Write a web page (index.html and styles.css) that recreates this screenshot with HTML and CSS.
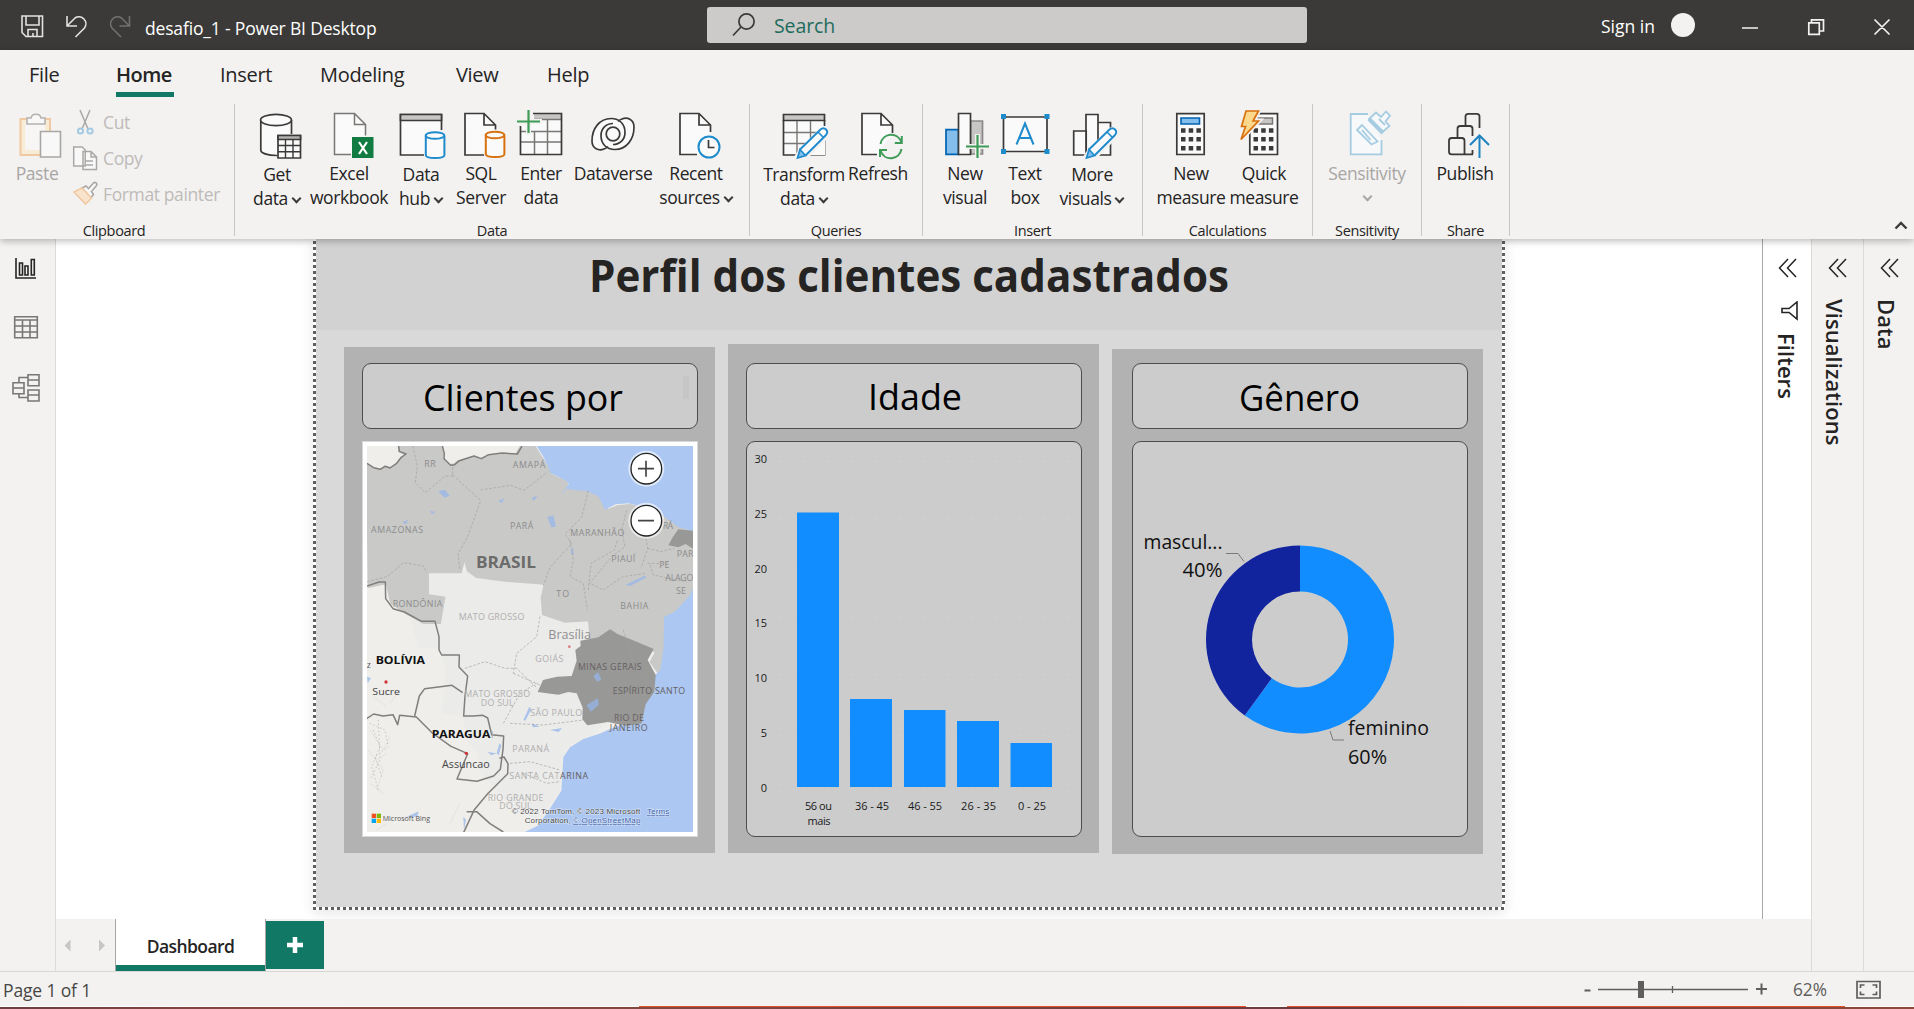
FILE: index.html
```html
<!DOCTYPE html>
<html lang="en">
<head>
<meta charset="utf-8">
<title>desafio_1 - Power BI Desktop</title>
<link rel="stylesheet" href="styles.css">
</head>
<body>
<div class="app">
  <header class="titlebar">
    <svg class="quick" width="140" height="50" fill="none" stroke="#e4e2e0" stroke-width="1.6">
      <path d="M22 16H42.500V36.500H26L22 32.500ZM26 16V25H39V16M28 36V29.500H37V36M33 36v-3"/>
      <path d="M67 16v10h10M67.500 25.500l7.500-7.500a7 7 0 0 1 9.500 10l-9 9"/>
      <path stroke="#73716f" d="M129.500 16v10h-10M129 25.500l-7.500-7.500a7 7 0 0 0-9.500 10l9 9"/>
    </svg>
    <div class="doc-name">desafio_1 - Power BI Desktop</div>
    <div class="search">
      <svg width="26" height="26" fill="none" stroke="#3b3a39" stroke-width="1.7"><circle cx="15.500" cy="9.500" r="7.600"/><path d="M10 15L2 23.500"/></svg>
      <span>Search</span>
    </div>
    <div class="signin">Sign in</div>
    <div class="avatar"></div>
    <svg class="winbtns" width="160" height="50" fill="none" stroke="#f3f2f1" stroke-width="1.7">
      <path d="M8 28h16M74.800 22.800h10.500v11.500H74.800zM77.500 22.800v-3h12V31h-4M140.500 19.500l15 15M155.500 19.500l-15 15"/>
    </svg>
  </header>

  <section class="ribbon">
    <nav class="tabs">
      <span class="tab t-file">File</span>
      <span class="tab t-home">Home</span>
      <span class="tab t-insert">Insert</span>
      <span class="tab t-modeling">Modeling</span>
      <span class="tab t-view">View</span>
      <span class="tab t-help">Help</span>
    </nav>
    <div class="groups">
      <div class="group g-clip">
        <div class="clip-body">
          <div class="btn off w-paste">
            <svg class="ico" viewBox="10 106 60 58"><path d="M24 119h26v36H20.500v-36z" fill="#f9ecd6" stroke="#f0c9a0" stroke-width="2"/><path d="M25 123h20v27H25z" fill="#f7f6f5"/><path d="M27 124v-6h4c1-5 9-5 10 0h4v6z" fill="#f8f8f8" stroke="#b5b3b1" stroke-width="1.600"/><path d="M40.500 131.500h20v25.500h-20z" fill="#f8f8f8" stroke="#a9a7a5" stroke-width="1.600"/></svg>
            <span>Paste</span>
          </div>
          <div class="clip-list">
            <div class="mini"><svg width="26" height="26" viewBox="72 109 26 26" fill="none" stroke-width="1.500"><path stroke="#aaa8a6" d="M80 110l8 19M90 110l-8 19"/><g stroke="#a3c9e4" stroke-width="2"><circle cx="80.500" cy="131" r="2.600"/><circle cx="90" cy="131" r="2.600"/></g></svg>Cut</div>
            <div class="mini"><svg width="26" height="26" viewBox="72 145 26 26" fill="#f8f8f8" stroke="#aaa8a6" stroke-width="1.500"><path d="M73.700 147h8.500l3 3v16H73.700zM83 151.500h8l5.500 5.500v12.500H83zM91 151.500v5.500h5.500M86 161h7M86 165h7"/></svg>Copy</div>
            <div class="mini"><svg width="26" height="26" viewBox="72 181 26 26" stroke-width="1.600"><path fill="#f8f8f8" stroke="#aaa8a6" d="M82 188l4-2 2.500 2.500 5-5.500c2-1.500 4 .5 3 2.500l-5 6 2 3-3 3.500z"/><path fill="#fae3cd" stroke="#f0c9a4" d="M74 192l8-4 9.500 10-6 6z"/></svg>Format painter</div>
          </div>
        </div>
        <div class="gname">Clipboard</div>
      </div>

      <div class="group g-data">
        <div class="btns">
          <div class="btn w64 low"><svg class="ico" viewBox="247 106 60 58" fill="#fafafa" stroke="#3b3a39" stroke-width="1.700"><path d="M260.800 120v30c0 3 6 5.500 16 5.500l15-5V120z" stroke="none"/><path d="M277 155.500c-10 0-16.200-2.500-16.200-5.500v-30M291.500 120v14"/><ellipse cx="276" cy="120" rx="15.400" ry="5.600"/><path d="M278 135.500h22.500v22.500H278z"/><path fill="#b3b1af" d="M278 135.500h22.500v4H278z"/><path d="M278 145.500h22.500M278 151.700h22.500M285.500 140v18M293 140v18" stroke-width="1.400"/></svg><span>Get<br>data<i class="chev"></i></span></div>
          <div class="btn w80"><svg class="ico" viewBox="319 106 60 58" fill="#fafafa" stroke="#797775" stroke-width="1.500"><path d="M353 154.500h-18.500v-41h20L365.500 124.500v14h-12z" stroke="none"/><path d="M351 154.500h-16.500v-41h20L365.500 124.500v11M354.500 113.500v11h11"/><path fill="#107c41" stroke="none" d="M352 137h21.500v21H352z"/><path d="M359 142l8 12M367 142l-8 12" stroke="#fff" stroke-width="2.200"/></svg><span>Excel<br>workbook</span></div>
          <div class="btn w64 low"><svg class="ico" viewBox="391 106 60 58" fill="#fafafa" stroke="#3b3a39" stroke-width="1.700"><path d="M424 155h-23.500v-40.500h41V129L424 134z" stroke="none"/><path d="M424 155h-23.500v-40.500h41V130"/><path fill="#c8c6c4" d="M400.500 114.500h41v6h-41z"/><g stroke="#1e8bcd" stroke-width="2"><path d="M425.800 136v19c0 4 18.600 4 18.600 0v-19"/><ellipse cx="435" cy="135.500" rx="9.300" ry="3.300"/></g></svg><span>Data<br>hub<i class="chev"></i></span></div>
          <div class="btn w56"><svg class="ico" viewBox="451 106 60 58" fill="#fafafa" stroke="#3b3a39" stroke-width="1.700"><path d="M484 155h-19v-41.500h19L495.500 125v6l-12 4z" stroke="none"/><path d="M484 155h-19v-41.500h19L495.500 125v4.500M484 113.500v11.500h11.500"/><g stroke="#d8700e" stroke-width="2"><path d="M485.800 135.500v18.500c0 4 18.600 4 18.600 0v-18.500"/><ellipse cx="495" cy="135" rx="9.300" ry="3.300"/></g></svg><span>SQL<br>Server</span></div>
          <div class="btn w64"><svg class="ico" viewBox="511 106 60 58" fill="#fafafa" stroke="#3b3a39" stroke-width="1.700"><path d="M520.500 125v29.500h41v-41H533v11z" stroke="none"/><path d="M534 114h27.500v5H534z" fill="#c8c6c4" stroke="none"/><path stroke="#797775" stroke-width="1.500" d="M534 119.500h27M520.500 131.500h41M520.500 142h41M534.500 132v22M547.500 120v34"/><path fill="none" d="M520.500 126v28.500h41v-41H533"/><path stroke="#f3f2f1" stroke-width="5" d="M528.500 122v13M528 121.500h14"/><path stroke="#3f9b58" stroke-width="2.200" d="M528.500 110v23M517 121.500h23"/></svg><span>Enter<br>data</span></div>
          <div class="btn w80"><svg class="ico" viewBox="583 106 60 58" fill="none" stroke="#3b3a39" stroke-width="1.700"><path fill="#fafafa" stroke="none" d="M607 148c-8 3-15 1-15-7 0-13 8-22.500 19-22.500 3 0 6 1 8 2 8-4 15-2 15 6.500 0 13-8 22.500-19 22.500-3 0-6-.5-8-1.500z"/><path d="M608 146.500q-2 2-4 2.500c-5 2-12 0-12-8 0-13 8-22.500 19-22.500 9 0 14 6 14 14 0 7-5 12-12 12M618 121.500q2-2 4-2.500c5-2 12 0 12 8 0 13-8 22.500-19 22.500-9 0-14-6-14-14 0-7 5-12 12-12"/><circle cx="613" cy="134" r="6.800"/></svg><span>Dataverse</span></div>
          <div class="btn w86"><svg class="ico" viewBox="666 106 60 58" fill="#fafafa" stroke="#3b3a39" stroke-width="1.700"><path d="M698 154.500h-18v-41h19L710.500 125v11l-12 4z" stroke="none"/><path d="M697 154.500h-17v-41h19L710.500 125v7M699 113.500v11.500h11.500"/><circle cx="709" cy="147" r="10.500" stroke="#1e8bcd" stroke-width="2"/><path d="M708.500 140v7.500h6"/></svg><span>Recent<br>sources<i class="chev"></i></span></div>
        </div>
        <div class="gname">Data</div>
      </div>

      <div class="group g-queries">
        <div class="btns">
          <div class="btn w80 low"><svg class="ico" viewBox="774 106 60 58" fill="#fafafa" stroke="#3b3a39" stroke-width="1.700"><path d="M783.500 114.500h41V155h-41z" stroke="none"/><path d="M783.500 114.500h41v6h-41z" fill="#c8c6c4"/><path stroke="#797775" stroke-width="1.400" d="M784 132.500h40M784 143.500h30M797 121v34M810.500 121v24"/><path d="M824.500 120v6M797 155h-13.500v-35M804 155h20.500v-15" fill="none"/><path d="M805 155.300h20v-20z" fill="#fafafa" stroke="none"/><use href="#pencil" x="784" y="107"/></svg><span>Transform<br>data<i class="chev"></i></span></div>
          <div class="btn w68"><svg class="ico" viewBox="848 106 60 58" fill="#fafafa" stroke="#3b3a39" stroke-width="1.700"><path d="M879 154.500h-17v-41h19L892.500 125v12l-12 4z" stroke="none"/><path d="M877 154.500h-15v-41h19L892.500 125v8M881 113.500v11.500h11.500"/><g fill="none" stroke="#3f9b58" stroke-width="2"><path d="M880.500 144c2-11 17-13 21-1.500M901.800 136v7h-7M901.500 149c-2 11-17 13-21 1.500M880 157v-7h7"/></g></svg><span>Refresh</span></div>
        </div>
        <div class="gname">Queries</div>
      </div>

      <div class="group g-insert">
        <div class="btns">
          <div class="btn w60"><svg class="ico" viewBox="935 106 60 58" fill="#fafafa" stroke="#3b3a39" stroke-width="1.700"><path fill="#83beec" stroke="#0063b1" d="M946 129.700h12.500v24.600H946z"/><path fill="#c8c6c4" stroke="#8a8886" d="M970.500 121h12v33h-12z"/><path d="M958.500 113.500h12v41h-12z"/><path stroke="#f3f2f1" stroke-width="5" d="M977.500 134v24M966 146.500h23"/><path stroke="#3f9b58" stroke-width="2.200" d="M977.500 135v23M966 146.500h23"/></svg><span>New<br>visual</span></div>
          <div class="btn w60"><svg class="ico" viewBox="995 106 60 58"><path fill="#fafafa" stroke="#3b3a39" stroke-width="1.700" d="M1003.500 117h43.500v34.500h-43.500z"/><path fill="#1e8bcd" d="M1001 114h5v5h-5zM1044.500 114h5v5h-5zM1001 149h5v5h-5zM1044.500 149h5v5h-5z"/><path fill="none" stroke="#1e8bcd" stroke-width="2" d="M1016.500 144.500l8.500-21 8.500 21M1019.500 138h11"/></svg><span>Text<br>box</span></div>
          <div class="btn w74 low"><svg class="ico" viewBox="1062 106 60 58" fill="#fafafa" stroke="#3b3a39" stroke-width="1.700"><path d="M1073.700 131h12.500v24h-12.500zM1098 122.500h12.500V155H1098zM1086 114.500h12V155h-12z"/><use href="#pencil" x="1073" y="107"/></svg><span>More<br>visuals<i class="chev"></i></span></div>
        </div>
        <div class="gname">Insert</div>
      </div>

      <div class="group g-calc">
        <div class="btns">
          <div class="btn w72"><svg class="ico" viewBox="1161 106 60 58"><path fill="#fafafa" stroke="#3b3a39" stroke-width="1.700" d="M1176.800 113.700h27.400v40.800h-27.400z"/><path fill="#83beec" stroke="#0063b1" stroke-width="1.600" d="M1181 118h18.500v6H1181z"/><path stroke="#3b3a39" stroke-width="4.500" stroke-dasharray="4.500 3.200" d="M1181 130.500h20M1181 139.300h20M1181 148.300h20"/></svg><span>New<br>measure</span></div>
          <div class="btn w74"><svg class="ico" viewBox="1234 106 60 58"><path fill="#fafafa" stroke="#3b3a39" stroke-width="1.700" d="M1249.800 113.700h27.700v40.800h-27.700z"/><path fill="#c8c6c4" stroke="#797775" stroke-width="1.500" d="M1257 118h15.500v6H1257z"/><path stroke="#3b3a39" stroke-width="4.500" stroke-dasharray="4.500 3.200" d="M1253.500 130.500h20M1253.500 139.300h20M1253.500 148.300h20"/><path fill="#fbd88b" stroke="#f3f2f1" stroke-width="5" d="M1246 111h12.500l-5.500 10h5.500L1241 139.500l4.500-13h-4z"/><path fill="#fbd88b" stroke="#d8700e" stroke-width="1.700" d="M1246 111h12.500l-5.500 10h5.500L1241 139.500l4.500-13h-4z"/></svg><span>Quick<br>measure</span></div>
        </div>
        <div class="gname">Calculations</div>
      </div>

      <div class="group g-sens">
        <div class="btns">
          <div class="btn off w82"><svg class="ico" viewBox="1337 106 60 58" fill="#f6f8f9" stroke="#a6cce2" stroke-width="1.800"><path d="M1368 114h-17.300v40.300h30.800V140"/><path d="M1360 125.500l17 14.500-.500 5-4.500-1z" stroke="none"/><path d="M1362 125l15.500 16.500-6 3L1357 130zM1362 130l8.500 10" /><path d="M1369 119l7-6.500 5 4.500 5-5.500 4 4-4.500 6 4 4.500-7 6z"/><path d="M1369 119l14 14" stroke-width="4"/><path d="M1379 119l6 6" /></svg><span>Sensitivity<br><i class="chev solo"></i></span></div>
        </div>
        <div class="gname">Sensitivity</div>
      </div>

      <div class="group g-share">
        <div class="btns">
          <div class="btn w70"><svg class="ico" viewBox="1435 106 60 58" fill="none" stroke="#3b3a39" stroke-width="1.800"><path d="M1479.500 128v-11.500q0-2.700-2.700-2.700h-8.600q-2.700 0-2.700 2.700V125M1472.500 154.300V150M1472.500 136v-7.300q0-2.700-2.700-2.700h-9.600q-2.700 0-2.700 2.700V137"/><path d="M1473 154.300h-14M1464.500 154.300v-13.600q0-2.700-2.700-2.700h-10.100q-2.700 0-2.700 2.700v11q0 2.700 2.700 2.700z"/><path stroke="#1e83c0" stroke-width="2" d="M1479.500 158v-22M1470 145l9.500-9.500 9.500 9.500"/></svg><span>Publish</span></div>
        </div>
        <div class="gname">Share</div>
      </div>
      <svg class="collapse" width="14" height="9"><path d="M1.500 7.500L7 2l5.500 5.500" fill="none" stroke="#3b3a39" stroke-width="2.400"/></svg>
    </div>
    <svg width="0" height="0" class="defs"><defs><g id="pencil"><path d="M16 45L37 23.500q3-2 5.500.5 2 3 0 5L21.500 50 11 53z" fill="#fafafa" stroke="#f3f2f1" stroke-width="5"/><path d="M16 42.500L36.500 22.500q3-2.500 5.500 0 2.500 2.500 0 5.500L21.500 48.500" fill="#fafafa" stroke="#1e8bcd" stroke-width="1.900"/><path d="M16 42.500l5.500 6L13.500 51z" fill="#83beec" stroke="#1e8bcd" stroke-width="1.700"/><path d="M34 25l5.500 5.500" stroke="#1e8bcd" stroke-width="1.600"/></g></defs></svg>
  </section>

  <main class="work">
    <aside class="rail">
      <svg width="56" height="180" viewBox="0 239 56 180" fill="none" stroke="#252423" stroke-width="1.600">
        <path d="M16 258v20h20M19.500 263h3v12h-3zM25 266h3v9h-3zM31.300 259.500h3V275h-3z"/>
        <g stroke="#797775"><path d="M14.700 316.800h22.600v21H14.700zM14.700 320h22.600M14.700 326h22.600M14.700 332h22.600M22.500 320v18M30 320v18"/>
        <path d="M28 374.700h11v11H28zM28 380h11M28 390h11v11H28zM28 395h11M13 382.700h11v11H13zM13 388h11M19 382v-4.500h9M19 394v3.500h9"/></g>
      </svg>
    </aside>

    <div class="center">
      <div class="stage">
        <div class="canvas">
          <div class="page">
            <svg class="banner" width="1186" height="91"><text x="273" y="52.500" textLength="640" lengthAdjust="spacingAndGlyphs">Perfil dos clientes cadastrados</text></svg>
            <div class="cards">
              <section class="card c1">
                <div class="head"><svg width="334" height="64"><text x="60" y="46.500" textLength="200" lengthAdjust="spacingAndGlyphs">Clientes por</text><path d="M323 12v23" stroke="#c6c6c6" stroke-width="6"/></svg></div>
                <div class="mapbox">
                  <svg class="map" width="326" height="386" viewBox="51 48 978 1158" preserveAspectRatio="none">
                    <path fill="#efeeeb" d="M51 48h978v1158H51z"/>
                    <path fill="#ebebea" d="M229 423h351v137l136 10 60 300-40 40-75 35-25 50-5 85-60 90-70-20-110-120-10-70-25-20-20-80-60-10 10-140-20-55-60 0-25-90z"/>
                    <path fill="#c9c9c8" stroke="#c9c9c8" stroke-width="6" d="M51 105l20 10 20 4 14-9 15 4 20-12 14-18 14-11-20-8-2-17h127l6 22-2 14 20 22 14-1 12-11 48-13 20 8 22-12 40-3 44 2 14-25 44 0 20 32 20 30 8 20 24 12 26 12-10 30 17-15 35 9 26 5 30 16 22 38 32-12 35-3 60 14 44 20 46 36 44 12v173l-14 22-40 46-26 20-4 84-8 66-14 14-26-36 16-30-52-28-80-33-64 30-5-64-72 4-66-22-4-50 10-42-120-9-85-11-27-19-10-38-10 43h-99v68l49 8-13 76-50 0-55-32-42-28-13-60-54 12z"/>
                    <path fill="#abc7f2" d="M560 48l20 32 15 30 6 18 24 12 22 12 10 8-12 18-12 16 18-18 30 5 30 2 34 16 20 40 32-16 38-3 58 14 44 22 50 36 42 12V48zM1029 475l-10 22-42 46-35 18-1 90-10 70-16 14-3 45-26 42-10 52-30 8-46 6-48 22-52 17-40 25-20 30-6 100-42 66-30 40-42 20h509z"/>
                    <path fill="#989897" d="M780 598l24 15 56 22 51 22-18 33 24 45-4 50-26 38-12 57-45 8-56-12-62 10-15-18 1-35-18-43-25-4-30 8-62-8 16-36 42-10 44-2 15-46-4-32 16-12-1-16 54-10z"/>
                    <path fill="#989897" d="M985 298l44 4v54l-22-14-22 10-30-6 14-26z"/>
                    <g fill="#95b6ea" opacity=".75"><path d="M265 183l20-4 14 18-16 6zM445 213l18-8-8 14zM545 203l18-6-12 16zM592 262l18-6 8 34-14 2zM240 242l16 4-10 6zM158 276l16-6-6 14zM662 368l6-18 4 26zM826 465l58-28 6 5-48 25zM710 825l34-20 2 20-24 20zM730 738l14-12 10 22-12 8zM600 900l36-6-10 12zM545 880l24 10-20 2zM520 870l18-40 6 8-18 34zM412 966l28 4-16 6zM440 970l8-30 6 6-8 30zM170 1160l36-16-4 16zM51 740l12 4-10 16zM340 1160l8 10-6 30z"/></g>
                    <g stroke="#a0a09f" stroke-width="2" stroke-dasharray="8 5" fill="none"><path d="M188 48l14 60-6 50 30 30 60-50h22V100M308 135l84 77-40 110-28 50 6 50M392 180l90-14 40 15 70-55M715 182l-20 80-50 50 20 30-65 70-20 55M660 330l10 60-10 50 40 20 12 80M715 480l8-80 70-40 10-30M830 240l-15 60 10 50-40 30-66 80 40 20 60-40 70-10M893 235l-10 60 10 60-20 60M893 355l40 10 40-10M893 400l60 0M900 405l10 30 100 20M51 455l60-15 50-42 60 10 8 20M570 560l-10 60-60 50-10 60M345 715l60-20 60 20 35 0 62 60M490 730l80 35M460 880l50-90 50-30M480 880l100 5 120-15M480 1000l60-5 90 25M520 1030l70 30 40-5M820 600l30 100 40 60-15 60"/></g>
                    <g stroke="#e4e2df" stroke-width="3" fill="none"><path d="M60 900l40 60 20-40M55 960l45 60-20 60M60 1060l40 30M80 990l30-20M110 1180l-30 20M150 780l-30 40M300 1180l30-60M70 800l40 30"/></g>
                    <g stroke="#c4c2be" stroke-width="3" stroke-dasharray="4 7" fill="none"><path d="M60 880l45 20 10 50-40 30 20 60M70 900l20 50-25 60 20 70M85 870l5 120-30 60"/></g>
                    <g stroke="#807f7d" stroke-width="4.500" fill="none" stroke-linejoin="round"><path d="M51 100l20 13 20 5 14-9 15 5 20-14 14-18 14-10-20-8-2-16M277 48l6 22-1 16 20 20 12-2 14-12 44-14 22 8 22-12 40-5 46 3 14-24M51 468l36-12h19l1 50 22 30 34 10 52 28h40l12 46v40l8 15h53l-1 36 26 27-8 60-4 60h28l30-2 14 8 12 50 36 4-2 40-8 60-20 20-50 16-60-7 32-76-50-22-56-40-48-48-50-5-6 28-14-30-30 4-28-6-30 20M194 858l14-60 16-22 82-10 32 22M448 985l14-4 12 20-1 30-60 60-40 48-28 60-5 10M350 1145l30 0 40 36 40 25"/></g>
                    <g fill="#d13438"><circle cx="108" cy="756" r="5"/><circle cx="349" cy="970" r="5"/><circle cx="658" cy="650" r="4" opacity=".6"/></g>
                    <g class="st"><text x="223" y="111" textLength="34">RR</text><text x="488" y="113" textLength="98">AMAPÁ</text><text x="63" y="308" textLength="156">AMAZONAS</text><text x="480" y="297" textLength="70">PARÁ</text><text x="661" y="319" textLength="162">MARANHÃO</text><text x="938" y="297" textLength="31">RÁ</text><text x="784" y="397" textLength="72">PIAUÍ</text><text x="928" y="414" textLength="30">PE</text><text x="980" y="381" textLength="50">PAR</text><text x="946" y="453" textLength="84">ALAGO</text><text x="978" y="492" textLength="30">SE</text><text x="811" y="536" textLength="84">BAHIA</text><text x="619" y="500" textLength="38">TO</text><text x="128" y="530" textLength="149">RONDÔNIA</text></g>
                    <g class="st pale"><text x="326" y="569" textLength="197">MATO GROSSO</text><text x="556" y="697" textLength="84">GOIÁS</text><text x="343" y="800" textLength="197">MATO GROSSO</text><text x="392" y="828" textLength="99">DO SUL</text><text x="541" y="859" textLength="155">SÃO PAULO</text><text x="487" y="965" textLength="110">PARANÁ</text><text x="478" y="1048" textLength="150">SANTA CAT</text><text x="413" y="1112" textLength="167">RIO GRANDE</text><text x="448" y="1138" textLength="97">DO SUL</text></g>
                    <g class="st dark"><text x="684" y="719" textLength="191">MINAS GERAIS</text><text x="788" y="791" textLength="217">ESPÍRITO SANTO</text><text x="792" y="872" textLength="90">RIO DE</text><text x="779" y="902" textLength="114">JANEIRO</text><text x="630" y="1048" textLength="84">ARINA</text></g>
                    <g class="lab"><text x="378" y="413" textLength="180" font-size="46" font-weight="700" fill="#6c6c6b" lengthAdjust="spacingAndGlyphs">BRASIL</text><text x="77" y="701" textLength="148" font-size="31" font-weight="700" lengthAdjust="spacingAndGlyphs">BOLÍVIA</text><text x="245" y="924" textLength="176" font-size="31" font-weight="700" lengthAdjust="spacingAndGlyphs">PARAGUA</text><text x="422" y="924" font-size="29" fill="#aaa">I</text><text x="595" y="628" textLength="128" font-size="36" fill="#8f8f8f" lengthAdjust="spacingAndGlyphs">Brasília</text><text x="67" y="796" textLength="83" font-size="29" fill="#444" lengthAdjust="spacingAndGlyphs">Sucre</text><text x="276" y="1013" textLength="143" font-size="30" fill="#444" lengthAdjust="spacingAndGlyphs">Assuncao</text><text x="50" y="714" font-size="26" fill="#555">z</text></g>
                    <path fill="#f25022" d="M65 1151h13v13H65z"/><path fill="#7fba00" d="M80 1151h13v13H80z"/><path fill="#00a4ef" d="M65 1166h13v13H65z"/><path fill="#ffb900" d="M80 1166h13v13H80z"/>
                    <g class="bing" font-size="24"><text x="98" y="1173" textLength="142" lengthAdjust="spacingAndGlyphs">Microsoft Bing</text></g>
                    <g class="copy" font-size="24"><text x="485" y="1153" textLength="386">© 2022 TomTom, © 2023 Microsoft</text><text x="891" y="1153" textLength="67" class="link">Terms</text><text x="524" y="1180" textLength="138">Corporation,</text><text x="669" y="1180" textLength="202" class="link">© OpenStreetMap</text></g>
                    <g fill="#fff"><circle cx="889" cy="116" r="54" opacity=".6"/><circle cx="889" cy="272" r="54" opacity=".6"/><circle cx="889" cy="116" r="46" stroke="#222" stroke-width="4"/><circle cx="889" cy="272" r="46" stroke="#222" stroke-width="4"/></g>
                    <path stroke="#444" stroke-width="5" d="M864 116h48M888 92v48M864 272h48"/>
                  </svg>
                </div>
              </section>
              <section class="card c2">
                <div class="head"><svg width="334" height="64"><text x="121" y="45.500" textLength="94" lengthAdjust="spacingAndGlyphs">Idade</text></svg></div>
                <div class="body">
                  <svg width="334" height="394" viewBox="747 442 334 394">
                    <path stroke="#c3c3c3" stroke-dasharray="1 5" d="M776 458.500h298M776 513h298M776 568h298M776 622.500h298M776 677.500h298M776 732.500h298M776 787.500h298"/>
                    <path fill="#118dff" d="M797 512.500h42V787h-42zM850 699h42v88h-42zM904 710h41.500v77H904zM957 721h42v66h-42zM1010.500 743h41.500v44h-41.500z"/>
                    <g class="ax" text-anchor="end"><text x="767" y="462.500">30</text><text x="767" y="517.500">25</text><text x="767" y="572.500">20</text><text x="767" y="626.500">15</text><text x="767" y="681.500">10</text><text x="767" y="736.500">5</text><text x="767" y="791.500">0</text></g>
                    <g class="ax"><text x="805" y="809.500" textLength="27">56 ou</text><text x="807.500" y="824.500" textLength="23">mais</text><text x="855" y="809.500" textLength="34">36 - 45</text><text x="908" y="809.500" textLength="34">46 - 55</text><text x="961" y="809.500" textLength="35">26 - 35</text><text x="1018" y="809.500" textLength="28">0 - 25</text></g>
                  </svg>
                </div>
              </section>
              <section class="card c3">
                <div class="head"><svg width="334" height="64"><text x="106" y="46.500" textLength="121" lengthAdjust="spacingAndGlyphs">Gênero</text></svg></div>
                <div class="body">
                  <svg width="334" height="394" viewBox="1133 442 334 394" fill="none">
                    <path fill="#118dff" d="M1300 545.500a94 94 0 1 1 -55.250 170.050l27.040-37.220a48 48 0 1 0 28.210-86.830z"/>
                    <path fill="#12239e" d="M1300 545.500a94 94 0 0 0 -55.250 170.050l27.040-37.220a48 48 0 0 1 28.210-86.830z"/>
                    <path stroke="#7a7a7a" d="M1226 553.500h12l6 8M1330 731l3 9h11"/>
                    <g class="dl"><text x="1143.500" y="549" textLength="79" lengthAdjust="spacingAndGlyphs">mascul...</text><text x="1182.500" y="577" textLength="40" lengthAdjust="spacingAndGlyphs">40%</text><text x="1348" y="735" textLength="81" lengthAdjust="spacingAndGlyphs">feminino</text><text x="1348" y="764" textLength="39" lengthAdjust="spacingAndGlyphs">60%</text></g>
                  </svg>
                </div>
              </section>
            </div>
          </div>
        </div>
        <aside class="filters">
          <svg width="20" height="20"><use href="#dbl"/></svg>
          <svg class="funnel" width="18" height="20" fill="none" stroke="#252423" stroke-width="1.600"><path d="M16 1v17L8 11.500H1v-4h7z"/></svg>
          <span>Filters</span>
        </aside>
      </div>
      <div class="pagetabs">
        <svg width="59" height="53" fill="#c8c6c4"><path d="M14.500 20.500v12L8.500 26.500zM43 20.500v12L49 26.500z"/></svg>
        <div class="ptab">Dashboard</div>
        <div class="addtab"><svg width="18" height="18"><path d="M9 1v16M1 9h16" stroke="#fff" stroke-width="4.500"/></svg></div>
      </div>
    </div>
    <aside class="pane p-vis"><svg width="20" height="20"><use href="#dbl"/></svg><span>Visualizations</span></aside>
    <aside class="pane p-data"><svg width="20" height="20"><defs><g id="dbl"><path d="M10 1L1.500 10 10 19M18 1L9.500 10 18 19" fill="none" stroke="#252423" stroke-width="1.500"/></g></defs><use href="#dbl"/></svg><span>Data</span></aside>
  </main>

  <footer class="status">
    <span>Page 1 of 1</span>
    <svg width="330" height="34" viewBox="1584 972 330 34" stroke="#605e5c" fill="none">
      <path stroke-width="2" d="M1584.500 990.500h6M1756 989h11M1761.500 983.500v11"/><path stroke-width="1.300" d="M1598 989.500h150M1672.500 986v7"/><path stroke-width="6" d="M1641 981v17"/>
      <path stroke-width="1.700" d="M1857 981.500h23v16.500h-23zM1860.500 988v-3h4M1872.500 985h4v3M1860.500 991.500v3h4M1872.500 994.500h4v-3"/>
      <text x="1793" y="996" textLength="34" lengthAdjust="spacingAndGlyphs">62%</text>
    </svg>
  </footer>
  <div class="edge"><i class="e1"></i><i class="e2"></i></div>
</div>
</body>
</html>
```
FILE: styles.css
```css
* { box-sizing: border-box; }
body { margin: 0; overflow: hidden; background: #f3f2f1; color: #252423; font-family: "Open Sans", "Noto Sans", sans-serif; }
svg { display: block; flex: none; }
.app { width: 1914px; height: 1009px; display: flex; flex-direction: column; }

.titlebar { height: 50px; background: #3b3a38; display: flex; align-items: center; color: #fff; }
.doc-name { margin-left: 5px; width: 562px; padding-top: 6px; font-size: 17.5px; letter-spacing: -.17px; white-space: nowrap; }
.search { width: 600px; height: 36px; background: #cccbca; border-radius: 3px; display: flex; align-items: center; padding-left: 24px; gap: 17px; color: #1f6b5c; font-size: 19.5px; }
.search span { letter-spacing: -.1px; }
.signin { margin-left: 294px; width: 70px; font-size: 17.500px; letter-spacing: 0; padding-top: 2px; }
.avatar { width: 24px; height: 24px; border-radius: 50%; background: #f3f2f1; }
.winbtns { margin-left: 39px; }

.ribbon { height: 189px; background: #f3f2f1; position: relative; z-index: 2; box-shadow: 0 2px 7px rgba(0,0,0,.28); display: flex; flex-direction: column; }
.tabs { height: 54px; display: flex; padding-left: 29px; font-size: 20px; letter-spacing: -.3px; white-space: nowrap; }
.tab { height: 47px; line-height: 50px; }
.t-file { width: 87px; }
.t-home { width: 58px; margin-right: 46px; font-weight: 600; letter-spacing: -.5px; border-bottom: 5px solid #117865; }
.t-insert { width: 100px; }
.t-modeling { width: 136px; }
.t-view { width: 91px; }
.groups { height: 132px; display: flex; position: relative; }
.group { border-right: 1px solid #c8c6c4; display: flex; flex-direction: column; }
.g-clip { width: 235px; }
.g-data { width: 515px; }
.g-queries { width: 173px; }
.g-insert { width: 220px; }
.g-calc { width: 170px; }
.g-sens { width: 109px; }
.g-share { width: 88px; }
.btns, .clip-body { height: 118px; display: flex; white-space: nowrap; }
.g-data .btns { padding-left: 10px; }
.g-queries .btns { padding-left: 14px; }
.g-insert .btns { padding-left: 12px; }
.g-calc .btns { padding-left: 12px; }
.g-sens .btns { padding-left: 13px; }
.g-share .btns { padding-left: 8px; }
.gname { text-align: center; font-size: 14.500px; line-height: 18px; height: 14px; letter-spacing: -.35px; }
.g-clip .gname { padding-right: 6px; }
.btn { display: flex; flex-direction: column; align-items: center; padding-top: 2px; font-size: 17.500px; line-height: 24px; text-align: center; letter-spacing: -.4px; }
.btn.low span { padding-top: 1px; }
.btn span { margin-top: -3px; }
.ico { width: 60px; height: 58px; }
.off { color: #a8a6a4; }
.w-paste { width: 74px; }
.w56 { width: 56px; } .w60 { width: 60px; } .w64 { width: 64px; } .w68 { width: 68px; } .w70 { width: 70px; }
.w72 { width: 72px; } .w74 { width: 74px; } .w80 { width: 80px; } .w82 { width: 82px; } .w86 { width: 86px; }
.chev { display: inline-block; width: 7px; height: 7px; border: solid #3b3a39; border-width: 0 2px 2px 0; transform: rotate(45deg); margin: 0 1px 3px 5px; }
.chev.solo { border-color: #a8a6a4; margin: 0 0 4px; }
.clip-list { display: flex; flex-direction: column; }
.mini { height: 36px; display: flex; align-items: center; gap: 5px; font-size: 17.500px; letter-spacing: -.38px; color: #bebbb8; margin-left: -2px; }
.w-paste .ico { align-self: flex-start; margin-left: 10px; }
.collapse { position: absolute; right: 6px; bottom: 6px; }
.defs { position: absolute; }

.work { height: 732px; display: flex; }
.rail { width: 56px; border-right: 1px solid #dddbd9; }
.center { width: 1755px; display: flex; flex-direction: column; }
.stage { height: 680px; display: flex; background: #fff; }
.canvas { width: 1706px; padding-left: 257px; }
.page { width: 1192px; height: 671px; padding: 0 3px 3px; box-shadow: 0 3px 12px rgba(0,0,0,.1);
  background:
    repeating-linear-gradient(90deg, #5f5f5f 0 3px, #fff 3px 6px) 0 100% / 100% 3px no-repeat,
    repeating-linear-gradient(180deg, #fff 0 2px, #5f5f5f 2px 5px, #fff 5px 6px) 0 0 / 3px 100% no-repeat,
    repeating-linear-gradient(180deg, #fff 0 2px, #5f5f5f 2px 5px, #fff 5px 6px) 100% 0 / 3px 100% no-repeat,
    #d9d9d9; }
.banner { background: #d2d2d2; font-size: 45px; font-weight: 700; fill: #252423; font-family: "Open Sans", "Noto Sans", sans-serif; }
.cards { display: flex; align-items: flex-start; padding-left: 28px; gap: 13px; }
.card { width: 371px; background: #b2b2b2; padding: 0 17px 0 18px; }
.c1 { margin-top: 17px; height: 506px; padding-top: 16px; }
.c2 { margin-top: 14px; height: 509px; padding-top: 19px; }
.c3 { margin-top: 19px; height: 505px; padding-top: 14px; padding-left: 20px; padding-right: 15px; }
.head, .body { width: 336px; border: 1px solid #4d4d4d; border-radius: 9px; background: #ccc; }
.head { height: 66px; margin-bottom: 12px; font-size: 36px; }
.body { height: 396px; }
.mapbox { width: 336px; height: 396px; border: 1px solid #d8d8d8; background: #fff; padding: 4px; }
.map { font-family: "Open Sans", "Noto Sans", sans-serif; }
.st { font-size: 26.5px; fill: #8c8c8b; font-weight: 500; }
.pale { fill: #b0aeae; }
.dark { fill: #66605f; }
.lab { fill: #111; }
.bing { fill: #555; }
.copy { font-family: "Liberation Sans", Arial, sans-serif; fill: #444; paint-order: stroke; stroke: rgba(255,255,255,.6); stroke-width: 3px; }
.link { fill: #3c5fa8; text-decoration: underline; }
.ax { font-size: 11px; fill: #1a1a1a; }
.dl { font-size: 20px; fill: #111; }

.filters { width: 49px; border-left: 1px solid #a8a8a8; background: #fff; display: flex; flex-direction: column; align-items: flex-start; padding: 19px 0 0 15px; }
.funnel { margin: 23px 0 0 3px; }
.filters span { margin: 12px 0 0 -4px; }
.filters span, .pane span { writing-mode: vertical-rl; font-size: 22px; line-height: 26px; font-weight: 600; letter-spacing: .05px; white-space: nowrap; }
.pane { border-left: 1px solid #dddbd9; display: flex; flex-direction: column; align-items: flex-start; padding: 19px 0 0 16px; }
.p-vis { width: 52px; }
.p-data { width: 51px; }
.pane span { margin: 21px 0 0 -6px; }

.pagetabs { height: 52px; display: flex; background: #f3f2f1; }
.ptab { width: 151px; height: 52px; background: #fff; border: solid #a8a6a4; border-width: 0 1px 0 1px; box-shadow: inset 0 -6px #117865; text-align: center; line-height: 54px; font-size: 17.500px; font-weight: 600; letter-spacing: -.6px; }
.addtab { width: 58px; height: 48px; margin-top: 2px; background: #117865; display: flex; align-items: center; justify-content: center; }

.status { height: 35px; border-top: 1px solid #d9d7d5; display: flex; justify-content: space-between; font-size: 17.500px; letter-spacing: -.15px; line-height: 36px; padding-left: 3px; color: #484644; }
.status svg { font-size: 18px; letter-spacing: 0; }
.status text { fill: #605e5c; stroke: none; }
.edge { height: 3px; display: flex; background: linear-gradient(90deg, #6d3c3f, #874a42 15%, #7d4640 40%, #6a3a40 70%, #8d4a3a) 0 1px no-repeat, #fff; padding-left: 639px; gap: 41px; }
.edge i { height: 1px; background: #e8502a; }
.e1 { width: 607px; }
.e2 { width: 558px; }
```
